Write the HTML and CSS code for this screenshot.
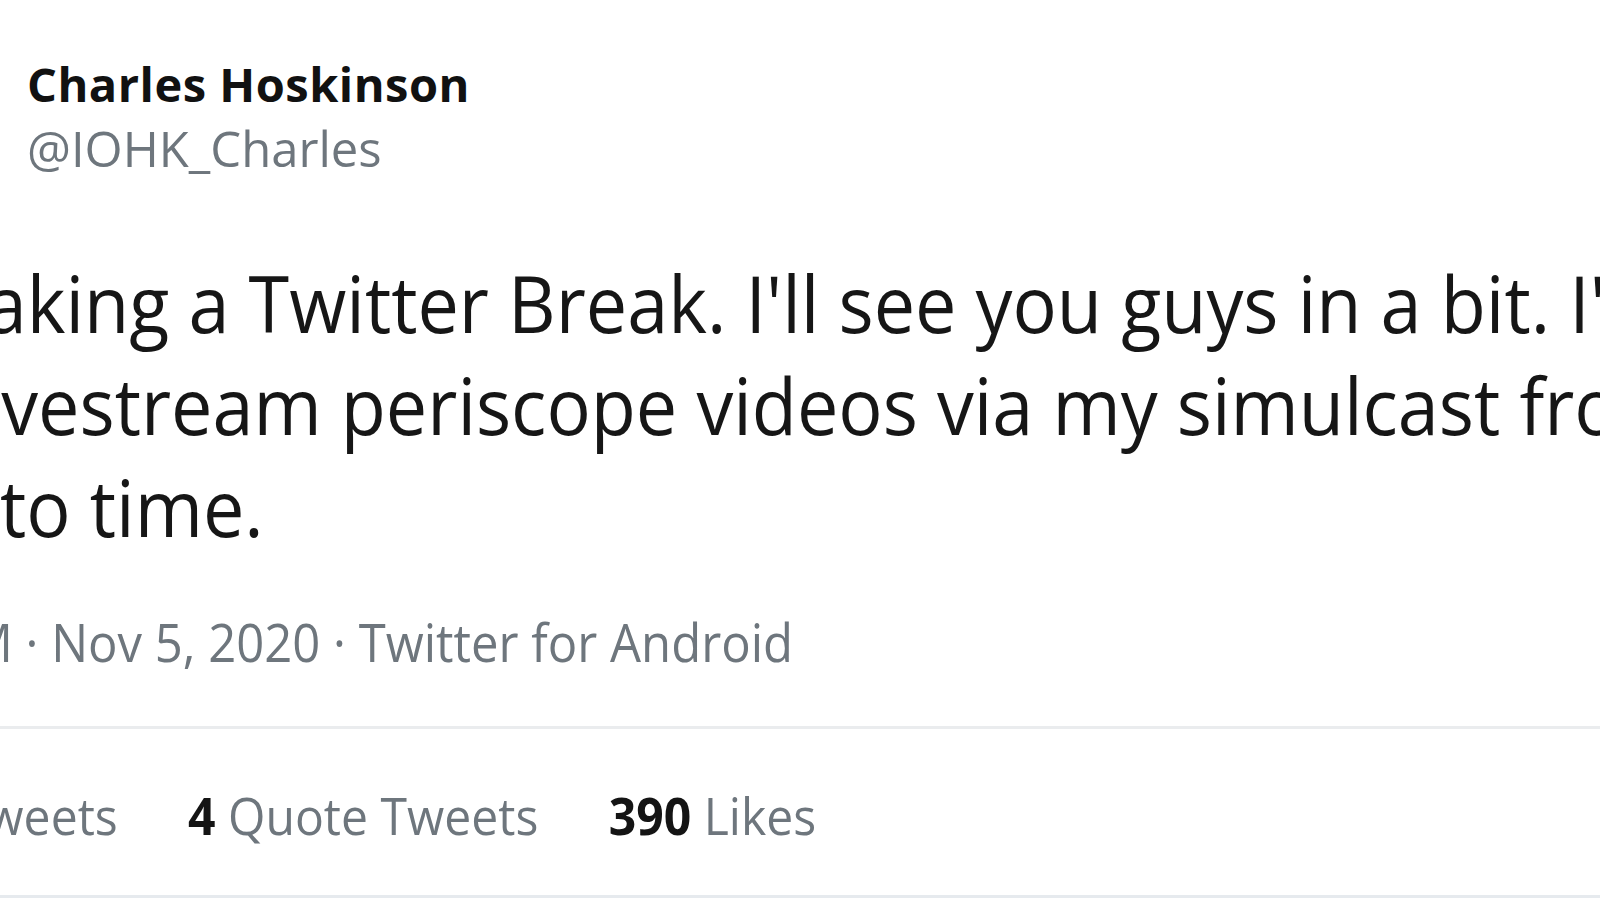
FILE: index.html
```html
<!DOCTYPE html>
<html lang="en">
  <head>
    <meta charset="UTF-8" />
    <meta name="viewport" content="width=device-width, initial-scale=1.0" />
    <title>Tweet</title>
    <link rel="stylesheet" href="styles.css">
  </head>

  <body>
    <div class="tweet">
      <div class="author">
        <div class="name">Charles Hoskinson</div>
        <div class="handle">@IOHK_Charles</div>
      </div>

      <p class="text">
        <span class="line cut1">Taking a Twitter Break. I'll see you guys in a bit. I'll</span>
        <span class="line cut2">livestream periscope videos via my simulcast from time</span>
        <span class="line">to time.</span>
      </p>

      <div class="meta">
        <span class="meta-inner">9:48 AM · Nov 5, 2020 · Twitter for Android</span>
      </div>

      <div class="stats">
        <div class="stats-inner">
          <span class="stat"><b>11</b> Retweets</span>
          <span class="stat"><b>4</b> Quote Tweets</span>
          <span class="stat"><b>390</b> Likes</span>
        </div>
      </div>
    </div>
  </body>
</html>
```

FILE: styles.css
```css
* {
  margin: 0;
  padding: 0;
  box-sizing: border-box;
}

body {
  font-family: "Open Sans", "Noto Sans", sans-serif;
  background: #fff;
  color: #141414;
  overflow: hidden;
  height: 900px;
}

.tweet {
  width: 1600px;
}

.author {
  padding: 53px 0 0 27px;
}

.name {
  font-size: 47px;
  font-weight: 700;
  line-height: 62px;
  letter-spacing: 0.5px;
  color: #111;
}

.handle {
  margin-top: 2px;
  font-size: 49px;
  line-height: 62px;
  color: #6e767d;
}

/* the screenshot font runs narrower than Open Sans */
.meta-inner,
.stats-inner {
  transform: scaleX(0.925);
  transform-origin: left top;
}

.text {
  margin-top: 73px;
  font-size: 78px;
  line-height: 102px;
  color: #161616;
  white-space: nowrap;
  transform: scaleX(0.945);
  transform-origin: left top;
}

.line {
  display: block;
}

.cut1 {
  margin-left: -58px;
}

.cut2 {
  margin-left: -38px;
}

.meta {
  margin-top: 44px;
  padding-bottom: 44px;
  border-bottom: 3px solid #eaecee;
  font-size: 53px;
  line-height: 80px;
  color: #6e767d;
  white-space: nowrap;
}

.meta-inner {
  display: inline-block;
  margin-left: -172px;
}

.stats {
  padding: 51px 0 45px;
  border-bottom: 3px solid #e6eaee;
  font-size: 52px;
  line-height: 70px;
  color: #6e767d;
  white-space: nowrap;
}

.stats-inner {
  display: inline-flex;
  gap: 76px;
  margin-left: -155px;
}

.stat b {
  color: #141414;
  font-weight: 700;
}
```
